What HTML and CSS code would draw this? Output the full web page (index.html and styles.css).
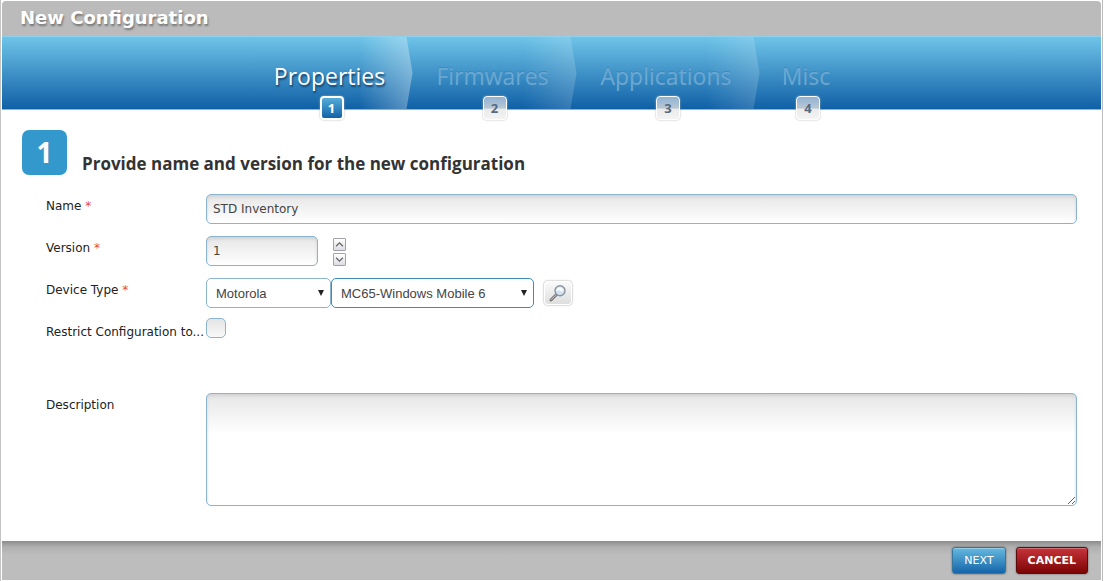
FILE: index.html
```html
<!DOCTYPE html>
<html lang="en">
  <head>
    <meta charset="UTF-8" />
    <meta name="viewport" content="width=device-width, initial-scale=1.0" />
    <title>New Configuration</title>
    <link rel="stylesheet" href="styles.css">
  </head>
  <body>
    <form class="dialog">
      <header class="titlebar">
        <h1>New Configuration</h1>
      </header>

      <ol class="steps">
        <li class="step active">
          <span class="step-name">Properties</span>
          <span class="badge">1</span>
        </li>
        <li class="step">
          <span class="step-name">Firmwares</span>
          <span class="badge">2</span>
        </li>
        <li class="step">
          <span class="step-name">Applications</span>
          <span class="badge">3</span>
        </li>
        <li class="step">
          <span class="step-name">Misc</span>
          <span class="badge">4</span>
        </li>
      </ol>

      <main class="content">
        <div class="heading">
          <span class="heading-number">1</span>
          <h2>Provide name and version for the new configuration</h2>
        </div>

        <div class="fields">
          <div class="row">
            <label for="name">Name <span class="required">*</span></label>
            <input type="text" id="name" class="box" value="STD Inventory" />
          </div>

          <div class="row">
            <label for="version">Version <span class="required">*</span></label>
            <input type="text" id="version" class="box version" value="1" />
            <div class="spinner">
              <button type="button" aria-label="Increase">
                <svg viewBox="0 0 13 13"><path d="M2.5 8.5 L6.5 4.5 L10.5 8.5" /></svg>
              </button>
              <button type="button" aria-label="Decrease">
                <svg viewBox="0 0 13 13"><path d="M2.5 4.5 L6.5 8.5 L10.5 4.5" /></svg>
              </button>
            </div>
          </div>

          <div class="row">
            <label for="vendor">Device Type <span class="required">*</span></label>
            <div class="select-wrap vendor">
              <select id="vendor">
                <option>Motorola</option>
              </select>
            </div>
            <div class="select-wrap model">
              <select id="model" aria-label="Device model">
                <option>MC65-Windows Mobile 6</option>
              </select>
            </div>
            <button type="button" class="search" aria-label="Search">
              <svg viewBox="0 0 18 18">
                <path d="M2 16 L7.5 10.5" stroke="#777" stroke-width="3" stroke-linecap="round" />
                <path d="M2.2 15.6 L7 10.8" stroke="#ccc" stroke-width="1" stroke-linecap="round" />
                <circle cx="11" cy="6.8" r="5" fill="#cfe3f3" stroke="#8c949c" stroke-width="1.4" />
                <path d="M7.3 7.2 Q9 5.6 11 6.8 T14.8 6.4 A4 4 0 0 0 7.3 5.6 Z" fill="#f6fbff" />
              </svg>
            </button>
          </div>

          <div class="row">
            <label for="restrict">Restrict Configuration to...</label>
            <input type="checkbox" id="restrict" />
          </div>

          <div class="row description">
            <label for="description">Description</label>
            <textarea id="description" class="box"></textarea>
          </div>
        </div>
      </main>

      <footer class="footer">
        <button type="button" class="btn next">NEXT</button>
        <button type="button" class="btn cancel">CANCEL</button>
      </footer>
    </form>
  </body>
</html>
```

FILE: styles.css
```css
* {
  box-sizing: border-box;
}

body {
  margin: 0;
  background: #fff;
  font-family: "DejaVu Sans", Verdana, sans-serif;
  font-size: 12px;
  color: #222;
}

.dialog {
  display: flex;
  flex-direction: column;
  min-height: 100vh;
  margin-right: 1px;
  padding: 1px 1px 1px;
  border-left: 1px solid #c4c4c4;
  border-right: 1px solid #bbb;
}

.titlebar {
  height: 35px;
  padding: 0 18px;
  background: #bbb;
  border-radius: 4px 4px 0 0;
}

.titlebar h1 {
  margin: 0;
  font-size: 18px;
  line-height: 34px;
  color: #fff;
  text-shadow: 1px 2px 2px #777;
}

/* wizard steps */
.steps {
  display: grid;
  grid-template-columns: 162px 164px 183px 97px;
  justify-content: center;
  height: 74px;
  margin: 0;
  padding: 0;
  list-style: none;
  background: linear-gradient(#6ec4e8, #1060a6);
  border-top: 1px solid #8fd0ee;
  border-bottom: 1px solid #8cb4d6;
}

.step {
  position: relative;
  display: flex;
  flex-direction: column;
  align-items: center;
  padding-top: 24px;
}

.step::after {
  content: "";
  position: absolute;
  top: 0;
  right: -2px;
  width: 54px;
  height: 72px;
  background: linear-gradient(to right, rgba(255, 255, 255, 0), rgba(255, 255, 255, 0.17));
  clip-path: polygon(0 0, 48px 0, 100% 50%, 48px 100%, 0 100%);
}

.step.active::after {
  background: linear-gradient(to right, rgba(255, 255, 255, 0), rgba(255, 255, 255, 0.33));
}

.step:last-child::after {
  display: none;
}

.step-name {
  position: relative;
  z-index: 1;
  font-family: "Trebuchet MS", "Open Sans", sans-serif;
  font-size: 23px;
  font-weight: 500;
  line-height: 30px;
  color: #6aa8d3;
  text-shadow: 0 -1px 0 #4288ba;
}

.step.active .step-name {
  color: #fff;
  text-shadow: 1px 2px 2px #10406c;
}

.badge {
  z-index: 1;
  flex: none;
  width: 24px;
  height: 24px;
  margin: 5px 0 0 4px;
  border: 1px solid #fff;
  border-radius: 4px;
  background: linear-gradient(#8fb2d2, #bac7d4 50%, #ebebeb 56%, #f3f3f3);
  box-shadow: 0 0 2px #aaa;
  font-family: "Trebuchet MS", "Open Sans", sans-serif;
  font-size: 13px;
  font-weight: bold;
  line-height: 22px;
  text-align: center;
  color: #56697e;
}

.step.active .badge {
  border: 2px solid #fff;
  background: linear-gradient(#55acd8, #1262a8);
  line-height: 20px;
  color: #fff;
}

/* form */
.content {
  flex: 1;
  padding: 20px 24px 34px 20px;
}

.heading {
  display: flex;
  align-items: flex-end;
  gap: 15px;
}

.heading-number {
  width: 45px;
  height: 45px;
  border-radius: 7px;
  background: #3399cc;
  font-family: "Trebuchet MS", "Open Sans", sans-serif;
  font-size: 28px;
  font-weight: bold;
  line-height: 45px;
  text-align: center;
  color: #fff;
}

.heading h2 {
  margin: 0;
  font-family: "Trebuchet MS", "Open Sans", sans-serif;
  font-size: 17px;
  font-weight: bold;
  line-height: 22px;
  color: #333;
}

.fields {
  display: flex;
  flex-direction: column;
  gap: 12px;
  margin-top: 19px;
  padding-left: 24px;
}

.row {
  display: flex;
  height: 30px;
}

.row label {
  flex: none;
  width: 160px;
  line-height: 24px;
  white-space: nowrap;
}

.required {
  color: #e8483f;
}

.box {
  flex: 1;
  min-width: 0;
  padding: 0 6px;
  border: 1px solid #8ab4cf;
  border-radius: 5px;
  outline: none;
  background: linear-gradient(#e6e6e6, #fff);
  box-shadow: inset 0 2px 3px #d2d2d2;
  font-family: inherit;
  font-size: 12px;
  color: #444;
}

.box.version {
  flex: none;
  width: 112px;
}

.spinner {
  display: flex;
  flex-direction: column;
  gap: 2px;
  margin: 2px 0 0 15px;
}

.spinner button {
  width: 13px;
  height: 13px;
  padding: 0;
  border: 1px solid #a2a2ac;
  border-radius: 1px;
  background: linear-gradient(#fff, #dcdce4);
}

.spinner svg {
  display: block;
  width: 11px;
  height: 11px;
  fill: none;
  stroke: #666;
  stroke-width: 1.5;
}

.select-wrap {
  position: relative;
  height: 30px;
}

.select-wrap::after {
  content: "";
  position: absolute;
  top: 12px;
  right: 7px;
  border: solid transparent;
  border-width: 6px 3px 0;
  border-top-color: #222;
  pointer-events: none;
}

.select-wrap select {
  width: 100%;
  height: 30px;
  padding: 0 9px;
  appearance: none;
  border: 1px solid #8ab4cf;
  border-radius: 5px;
  background: #fff;
  font-family: "Liberation Sans", Arial, sans-serif;
  font-size: 13px;
  color: #444;
}

.vendor {
  width: 125px;
}

.model {
  width: 203px;
}

.model select {
  border-color: #3d8db3;
}

.search {
  width: 28px;
  height: 24px;
  margin: 3px 0 0 10px;
  padding: 0;
  border: 1px solid #fff;
  border-radius: 4px;
  background: linear-gradient(#fafafa, #dedede);
  box-shadow: 0 0 2px #888;
}

.search svg {
  display: block;
  width: 18px;
  height: 18px;
  margin: 0 auto;
  fill: none;
}

.row input[type="checkbox"] {
  width: 20px;
  height: 20px;
  margin: -2px 0 0;
  appearance: none;
  border: 1px solid #8ab4cf;
  border-radius: 5px;
  background: linear-gradient(#e4e4e4, #f8f8f8);
}

.row.description {
  height: 113px;
  margin-top: 31px;
}

.description .box {
  padding: 6px;
  background: linear-gradient(#e6e6e6, #fff 40px);
  resize: vertical;
}

/* buttons */
.footer {
  display: flex;
  justify-content: flex-end;
  gap: 10px;
  height: 39px;
  padding: 6px 13px;
  background: linear-gradient(#8c8c8c, #b0b0b0 6px, #bdbdbd 14px);
}

.btn {
  height: 27px;
  padding: 0 11px;
  border: 1px solid #34789f;
  border-radius: 3px;
  background: linear-gradient(#66b9df, #1465aa);
  box-shadow: inset 0 1px 0 rgba(255, 255, 255, 0.3), 0 0 2px #555;
  font-family: Verdana, "DejaVu Sans", sans-serif;
  font-size: 11px;
  color: #fff;
}

.btn.cancel {
  border-color: #5c0a0a;
  background: linear-gradient(#c7343a, #7c0404);
  font-weight: bold;
}
```
